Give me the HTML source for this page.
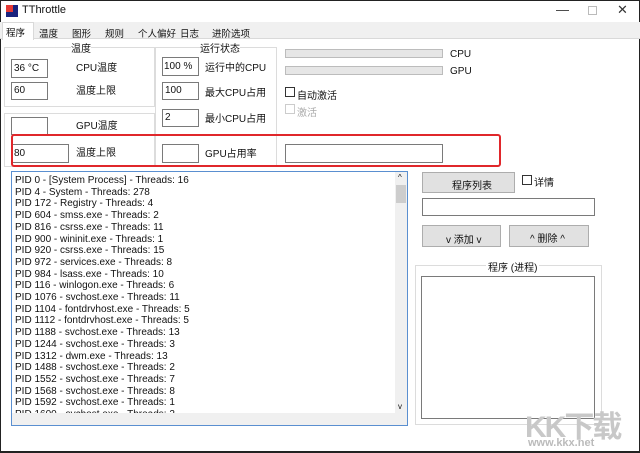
<!DOCTYPE html>
<html><head><meta charset="utf-8"><style>
*{margin:0;padding:0;box-sizing:border-box}
body{width:640px;height:453px;background:#fff;position:relative;overflow:hidden;font-family:"Liberation Sans","Noto Sans CJK SC",sans-serif;font-size:10px;color:#111}
.a{position:absolute}
.tb{border:1px solid #7a7a7a;background:#fff}
.btn{border:1px solid #adadad;background:#e1e1e1;text-align:center}
.l{position:absolute;white-space:nowrap}
.grp{position:absolute;border:1px solid #dcdcdc}
</style></head><body>
<div class="a" style="left:0;top:0;width:640px;height:453px;border:1px solid #222;border-bottom-width:2px"></div>
<!-- title -->
<div class="a" style="left:6px;top:5px;width:12px;height:12px;background:#1a237e"><div class="a" style="left:0;top:0;width:7px;height:7px;background:#e53935"></div></div>
<div class="l" style="left:22px;top:4px;font-size:11px">TThrottle</div>
<div class="l" style="left:556px;top:2px;font-size:13px;color:#333">—</div>
<div class="a" style="left:588px;top:6px;width:9px;height:9px;border:1px solid #bbb"></div>
<div class="l" style="left:617px;top:2px;font-size:13px;color:#333">✕</div>
<!-- tabs -->
<div class="a" style="left:0;top:22px;width:640px;height:17px;background:#f0f0f0;border-bottom:1px solid #d9d9d9"></div>
<div class="a" style="left:2px;top:22px;width:32px;height:18px;background:#fff;border:1px solid #d9d9d9;border-bottom:none"></div>
<div style="font-size:9.5px">
<div class="l" style="left:6px;top:25px">程序</div>
<div class="l" style="left:39px;top:26px">温度</div>
<div class="l" style="left:72px;top:26px">图形</div>
<div class="l" style="left:105px;top:26px">规则</div>
<div class="l" style="left:138px;top:26px">个人偏好</div>
<div class="l" style="left:180px;top:26px">日志</div>
<div class="l" style="left:212px;top:26px">进阶选项</div>
</div>
<!-- groups -->
<div class="grp" style="left:4px;top:47px;width:151px;height:60px"></div>
<div class="l" style="left:71px;top:40px;background:#fff">温度</div>
<div class="grp" style="left:4px;top:113px;width:151px;height:54px"></div>
<div class="grp" style="left:155px;top:47px;width:122px;height:120px"></div>
<div class="l" style="left:200px;top:40px;background:#fff">运行状态</div>
<div class="tb a" style="left:11px;top:59px;width:37px;height:19px"></div><div class="l" style="left:14px;top:63px">36 °C</div>
<div class="l" style="left:76px;top:59px">CPU温度</div>
<div class="tb a" style="left:11px;top:82px;width:37px;height:18px"></div><div class="l" style="left:14px;top:85px">60</div>
<div class="l" style="left:76px;top:82px">温度上限</div>
<div class="tb a" style="left:11px;top:117px;width:37px;height:18px"></div>
<div class="l" style="left:76px;top:117px">GPU温度</div>
<div class="tb a" style="left:11px;top:144px;width:58px;height:19px"></div><div class="l" style="left:14px;top:148px">80</div>
<div class="l" style="left:76px;top:144px">温度上限</div>
<div class="tb a" style="left:162px;top:57px;width:37px;height:19px"></div><div class="l" style="left:164px;top:61px">100 %</div>
<div class="l" style="left:205px;top:59px">运行中的CPU</div>
<div class="tb a" style="left:162px;top:82px;width:37px;height:18px"></div><div class="l" style="left:165px;top:85px">100</div>
<div class="l" style="left:205px;top:84px">最大CPU占用</div>
<div class="tb a" style="left:162px;top:109px;width:37px;height:18px"></div><div class="l" style="left:165px;top:112px">2</div>
<div class="l" style="left:205px;top:110px">最小CPU占用</div>
<div class="tb a" style="left:162px;top:144px;width:37px;height:19px"></div>
<div class="l" style="left:205px;top:145px">GPU占用率</div>
<div class="tb a" style="left:285px;top:144px;width:158px;height:19px"></div>
<!-- bars -->
<div class="a" style="left:285px;top:49px;width:158px;height:9px;background:#e6e6e6;border:1px solid #bcbcbc"></div>
<div class="l" style="left:450px;top:49px">CPU</div>
<div class="a" style="left:285px;top:66px;width:158px;height:9px;background:#e6e6e6;border:1px solid #bcbcbc"></div>
<div class="l" style="left:450px;top:66px">GPU</div>
<div class="a" style="left:285px;top:87px;width:10px;height:10px;border:1px solid #333"></div>
<div class="l" style="left:297px;top:87px">自动激活</div>
<div class="a" style="left:285px;top:104px;width:10px;height:10px;border:1px solid #ccc"></div>
<div class="l" style="left:297px;top:104px;color:#aaa">激活</div>
<!-- red box -->
<div class="a" style="left:11px;top:134px;width:490px;height:33px;border:2px solid #e0272b;border-radius:3px"></div>
<!-- list -->
<div class="a" style="left:11px;top:171px;width:397px;height:255px;border:1px solid #5a8fd0;overflow:hidden">
<div class="a" style="left:383px;top:0;width:12px;height:241px;background:#f0f0f0"></div>
<div class="a" style="left:384px;top:13px;width:10px;height:18px;background:#cdcdcd"></div>
<div class="l" style="left:386px;top:1px;font-size:8px">^</div>
<div class="l" style="left:386px;top:230px;font-size:8px">v</div>
<div class="a" style="left:3px;top:3px;line-height:11.7px;font-size:10px">
PID 0 - [System Process] - Threads: 16<br>PID 4 - System - Threads: 278<br>PID 172 - Registry - Threads: 4<br>PID 604 - smss.exe - Threads: 2<br>PID 816 - csrss.exe - Threads: 11<br>PID 900 - wininit.exe - Threads: 1<br>PID 920 - csrss.exe - Threads: 15<br>PID 972 - services.exe - Threads: 8<br>PID 984 - lsass.exe - Threads: 10<br>PID 116 - winlogon.exe - Threads: 6<br>PID 1076 - svchost.exe - Threads: 11<br>PID 1104 - fontdrvhost.exe - Threads: 5<br>PID 1112 - fontdrvhost.exe - Threads: 5<br>PID 1188 - svchost.exe - Threads: 13<br>PID 1244 - svchost.exe - Threads: 3<br>PID 1312 - dwm.exe - Threads: 13<br>PID 1488 - svchost.exe - Threads: 2<br>PID 1552 - svchost.exe - Threads: 7<br>PID 1568 - svchost.exe - Threads: 8<br>PID 1592 - svchost.exe - Threads: 1<br>PID 1600 - svchost.exe - Threads: 2</div>
<div class="a" style="left:0;top:241px;width:395px;height:12px;background:#f0f0f0"></div>
</div>
<!-- right -->
<div class="btn a" style="left:422px;top:172px;width:93px;height:21px"></div><div class="l" style="left:452px;top:177px">程序列表</div>
<div class="a" style="left:522px;top:175px;width:10px;height:10px;border:1px solid #333"></div><div class="l" style="left:534px;top:174px">详情</div>
<div class="tb a" style="left:422px;top:198px;width:173px;height:18px"></div>
<div class="btn a" style="left:422px;top:225px;width:79px;height:22px"></div><div class="l" style="left:446px;top:231px">v 添加 v</div>
<div class="btn a" style="left:509px;top:225px;width:80px;height:22px"></div><div class="l" style="left:530px;top:230px">^ 删除 ^</div>
<div class="grp" style="left:415px;top:265px;width:187px;height:160px"></div>
<div class="l" style="left:486px;top:259px;background:#fff;padding:0 2px">程序 (进程)</div>
<div class="tb a" style="left:421px;top:276px;width:174px;height:143px"></div>
<div class="l" style="left:525px;top:402px;font-size:30px;font-weight:bold;color:#c8c8c8;letter-spacing:-2px">KK下载</div>
<div class="l" style="left:528px;top:437px;font-size:11px;font-weight:bold;color:#bbb">www.kkx.net</div>
</body></html>
